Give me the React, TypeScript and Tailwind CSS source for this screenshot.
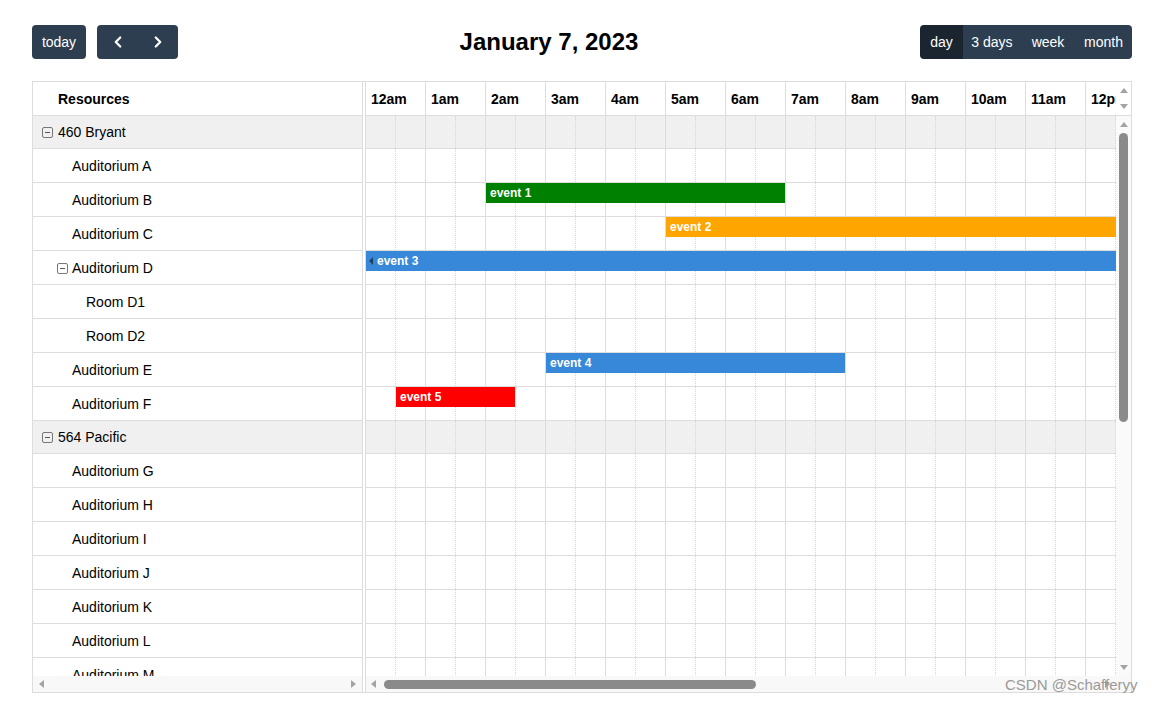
import { ChevronLeft, ChevronRight } from "lucide-react";

type Row = {
  name: string;
  level: 0 | 1 | 2;
  group?: boolean;
  expander?: boolean;
};

type CalEvent = { row: string; title: string; left: number; width: number; color: string; cont?: boolean };

const rows: Row[] = [
  { name: "460 Bryant", level: 0, group: true, expander: true },
  { name: "Auditorium A", level: 1 },
  { name: "Auditorium B", level: 1 },
  { name: "Auditorium C", level: 1 },
  { name: "Auditorium D", level: 1, expander: true },
  { name: "Room D1", level: 2 },
  { name: "Room D2", level: 2 },
  { name: "Auditorium E", level: 1 },
  { name: "Auditorium F", level: 1 },
  { name: "564 Pacific", level: 0, group: true, expander: true },
  { name: "Auditorium G", level: 1 },
  { name: "Auditorium H", level: 1 },
  { name: "Auditorium I", level: 1 },
  { name: "Auditorium J", level: 1 },
  { name: "Auditorium K", level: 1 },
  { name: "Auditorium L", level: 1 },
  { name: "Auditorium M", level: 1 },
];

const hours = ["12am", "1am", "2am", "3am", "4am", "5am", "6am", "7am", "8am", "9am", "10am", "11am", "12pm"];

const events: CalEvent[] = [
  { row: "Auditorium B", title: "event 1", left: 120, width: 299, color: "bg-[#008000]" },
  { row: "Auditorium C", title: "event 2", left: 300, width: 480, color: "bg-[#ffa500]" },
  { row: "Auditorium D", title: "event 3", left: 0, width: 780, color: "bg-[#3788d8]", cont: true },
  { row: "Auditorium E", title: "event 4", left: 180, width: 299, color: "bg-[#3788d8]" },
  { row: "Auditorium F", title: "event 5", left: 30, width: 119, color: "bg-[#ff0000]" },
];

// group rows are a pixel shorter than resource rows
const rowH = (r: Row) => (r.group ? "h-[33px]" : "h-[34px]");

function Expander() {
  return (
    <span className="w-[11px] h-[11px] border border-[#777] rounded-[2px] flex items-center justify-center shrink-0">
      <span className="w-[5px] h-px bg-[#555]" />
    </span>
  );
}

function Tri({ dir }: { dir: "up" | "down" | "left" | "right" }) {
  const pts = {
    up: "0,5 4,0 8,5",
    down: "0,0 8,0 4,5",
    left: "5,0 5,8 0,4",
    right: "0,0 0,8 5,4",
  }[dir];
  const vert = dir === "up" || dir === "down";
  return (
    <svg width={vert ? 8 : 5} height={vert ? 5 : 8} viewBox={vert ? "0 0 8 5" : "0 0 5 8"}>
      <polygon points={pts} fill="#a3a3a3" />
    </svg>
  );
}

function Btn({ children, active, className = "" }: { children: React.ReactNode; active?: boolean; className?: string }) {
  return (
    <button
      className={`h-[34px] px-[9px] text-white text-[14px] whitespace-nowrap flex items-center justify-center ${
        active ? "bg-[#1a252f]" : "bg-[#2c3e50]"
      } ${className}`}
    >
      {children}
    </button>
  );
}

export default function App() {
  return (
    <div
      className="relative w-[1154px] h-[704px] bg-white pt-[25px] pl-[32px] text-black"
      style={{ fontFamily: '"Liberation Sans", Arial, sans-serif' }}
    >
      {/* toolbar */}
      <div className="w-[1100px] h-[34px] mb-[22px] flex items-center justify-between">
        <div className="flex items-center gap-[11px]">
          <Btn className="rounded-[4px] w-[54px]">today</Btn>
          <div className="flex">
            <Btn className="rounded-l-[4px] w-[41px]">
              <ChevronLeft size={18} strokeWidth={3} />
            </Btn>
            <Btn className="rounded-r-[4px] w-[40px]">
              <ChevronRight size={18} strokeWidth={3} />
            </Btn>
          </div>
        </div>
        <h2 className="text-[24px] font-bold leading-none">January 7, 2023</h2>
        <div className="flex">
          <Btn active className="rounded-l-[4px] w-[43px]">day</Btn>
          <Btn className="w-[58px]">3 days</Btn>
          <Btn className="w-[54px]">week</Btn>
          <Btn className="rounded-r-[4px] w-[57px]">month</Btn>
        </div>
      </div>

      {/* calendar body */}
      <div className="w-[1100px] h-[612px] border border-[#ddd] flex text-[14px]">
        {/* resource pane */}
        <div className="w-[330px] border-r border-[#ddd] flex flex-col shrink-0">
          <div className="h-[34px] border-b border-[#ddd] flex items-center pt-px pl-[25px] font-bold">Resources</div>
          <div className="h-[560px] overflow-hidden">
            {rows.map((r) => (
              <div
                key={r.name}
                className={`${rowH(r)} border-b border-[#ddd] flex items-center pt-px ${r.group ? "bg-[#f0f0f0]" : ""} ${
                  r.level === 0 ? "pl-[9px] gap-[5px]" : r.level === 2 ? "pl-[53px]" : r.expander ? "pl-[24px] gap-[4px]" : "pl-[39px]"
                }`}
              >
                {r.expander && <Expander />}
                <span>{r.name}</span>
              </div>
            ))}
          </div>
          <div className="h-[16px] bg-[#f8f8f8] flex items-center justify-between px-[6px]">
            <Tri dir="left" />
            <Tri dir="right" />
          </div>
        </div>

        {/* divider */}
        <div className="w-[3px] border-r border-[#ddd] shrink-0" />

        {/* timeline */}
        <div className="w-[765px] flex flex-col">
          <div className="h-[34px] border-b border-[#ddd] flex">
            <div className="w-[750px] overflow-hidden flex">
              {hours.map((h) => (
                <div key={h} className="w-[60px] shrink-0 border-r border-[#ddd] flex items-center pt-px pl-[5px] font-bold">
                  {h}
                </div>
              ))}
            </div>
            <div className="w-[15px] flex flex-col items-center justify-between py-[6px] bg-white">
              <Tri dir="up" />
              <Tri dir="down" />
            </div>
          </div>

          <div className="h-[560px] flex">
            <div className="w-[750px] overflow-hidden">
              {rows.map((r) => {
                const ev = events.find((e) => e.row === r.name);
                return (
                  <div
                    key={r.name}
                    className={`relative ${rowH(r)} border-b border-[#ddd] flex ${r.group ? "bg-[#f0f0f0]" : ""}`}
                  >
                    {hours.map((h) => (
                      <div key={h} className="w-[60px] shrink-0 border-r border-[#ddd]">
                        <div className="w-[30px] h-full border-r border-dotted border-[#d6d6d6]" />
                      </div>
                    ))}
                    {ev && (
                      <div
                        className={`absolute top-0 h-[20px] ${ev.color} text-white text-[12px] font-bold flex items-center ${
                          ev.cont ? "pl-[3px] gap-[4px]" : "pl-[4px]"
                        }`}
                        style={{ left: ev.left, width: ev.width }}
                      >
                        {ev.cont && (
                          <svg width="4" height="8" viewBox="0 0 4 8">
                            <polygon points="4,0 4,8 0,4" fill="#1f3f60" />
                          </svg>
                        )}
                        {ev.title}
                      </div>
                    )}
                  </div>
                );
              })}
            </div>
            <div className="w-[15px] bg-[#fafafa] flex flex-col items-center pt-[6px] pb-[6px]">
              <Tri dir="up" />
              <div className="w-[9px] h-[289px] mt-[6px] rounded-full bg-[#8a8a8a]" />
              <div className="flex-1" />
              <Tri dir="down" />
            </div>
          </div>

          <div className="h-[16px] bg-[#f8f8f8] flex items-center pl-[5px] pr-[21px]">
            <Tri dir="left" />
            <div className="w-[372px] h-[9px] ml-[8px] rounded-full bg-[#8a8a8a]" />
            <div className="flex-1" />
            <Tri dir="right" />
          </div>
        </div>
      </div>

      <div className="absolute left-[1005px] top-[677px] text-[15px] text-[#9a9a9a] leading-none">CSDN @Schafferyy</div>
    </div>
  );
}
